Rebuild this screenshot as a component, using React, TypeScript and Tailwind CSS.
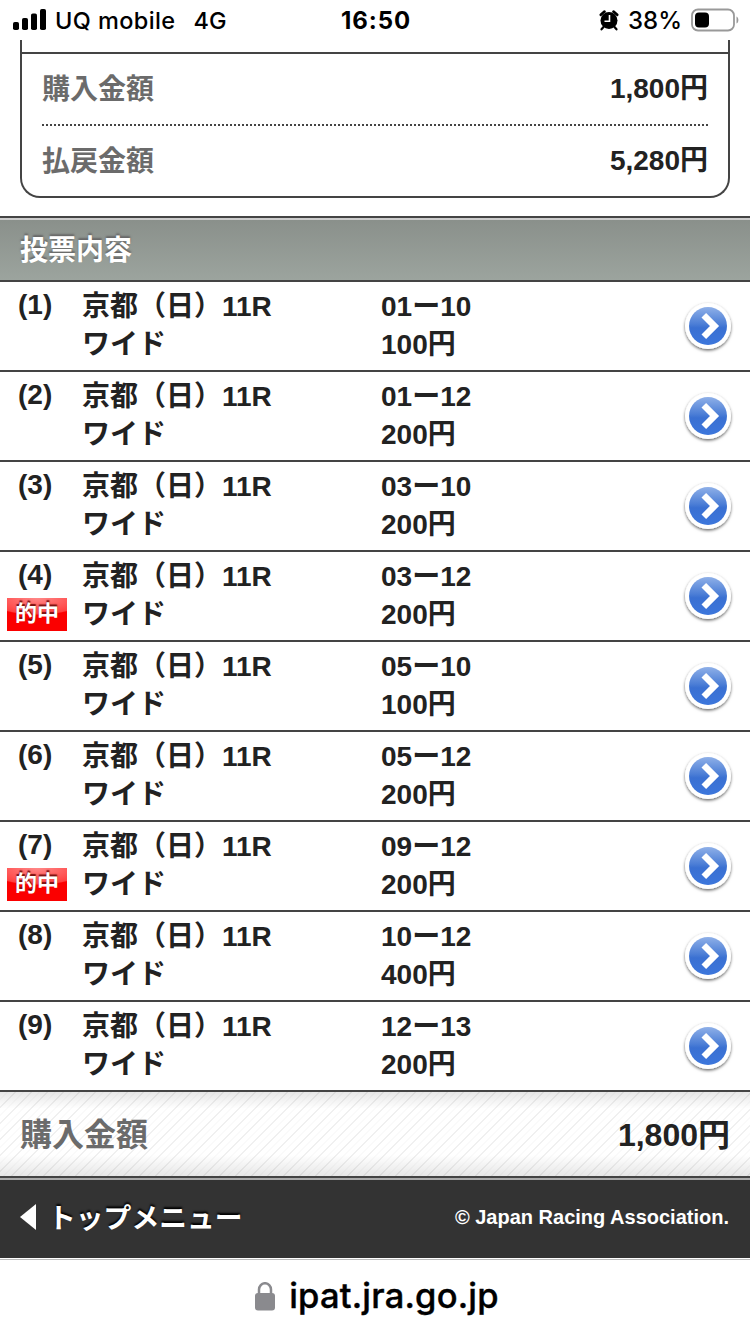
const BETS = [
  { no: 1, pair: "01ー10", amount: "100円", hit: false },
  { no: 2, pair: "01ー12", amount: "200円", hit: false },
  { no: 3, pair: "03ー10", amount: "200円", hit: false },
  { no: 4, pair: "03ー12", amount: "200円", hit: true },
  { no: 5, pair: "05ー10", amount: "100円", hit: false },
  { no: 6, pair: "05ー12", amount: "200円", hit: false },
  { no: 7, pair: "09ー12", amount: "200円", hit: true },
  { no: 8, pair: "10ー12", amount: "400円", hit: false },
  { no: 9, pair: "12ー13", amount: "200円", hit: false },
];

const StatusBar = () => {
  return (
    <div className="flex h-10 items-center justify-between pl-[13px] pr-[11px] pt-px font-['Inter','Liberation_Sans',sans-serif] text-[23.5px] font-medium leading-10 text-black">
      <div className="flex w-[320px] items-center">
        <svg className="mb-px" width="33" height="22" viewBox="0 0 33 22" fill="#000">
          <rect x="0" y="13" width="6" height="8" rx="1.8" />
          <rect x="9" y="9" width="6" height="12" rx="1.8" />
          <rect x="18" y="4.5" width="6" height="16.5" rx="1.8" />
          <rect x="27" y="0" width="6" height="21" rx="1.8" />
        </svg>
        <span className="ml-[9px] tracking-[0.4px]">UQ mobile</span>
        <span className="ml-[18px]">4G</span>
      </div>
      <span className="text-[24px] font-bold tracking-[0.9px]">16:50</span>
      <div className="flex w-[320px] items-center justify-end">
        <svg width="20" height="23" viewBox="0 0 20 23">
          <circle cx="10" cy="11.5" r="8.5" fill="#000" />
          <path d="M1.8 5.8 L5.5 2.6 M14.5 2.6 L18.2 5.8" stroke="#000" strokeWidth="2.6" strokeLinecap="round" />
          <path d="M4.5 18 L2.5 20.3 M15.5 18 L17.5 20.3" stroke="#000" strokeWidth="2.2" strokeLinecap="round" />
          <path d="M10.5 6 V12.2 H5.5" stroke="#fff" strokeWidth="1.6" fill="none" />
        </svg>
        <span className="ml-[9px] text-[24px]">38%</span>
        <svg className="mb-px ml-[9px]" width="48" height="24" viewBox="0 0 48 24">
          <rect x="1" y="1.5" width="42" height="21" rx="6" fill="none" stroke="#999" strokeWidth="1.8" />
          <rect x="4" y="4.5" width="14" height="15" rx="4" fill="#000" />
          <path d="M45.5 8.5 C48 9.5 48 14.5 45.5 15.5 Z" fill="#999" />
        </svg>
      </div>
    </div>
  );
};

const SummaryRow = ({ label, value }: { label: string; value: string }) => {
  return (
    <div className="flex h-[70px] items-center justify-between leading-[38px]">
      <span className="pt-0.5 text-[#6b6b6b]">{label}</span>
      <span>{value}</span>
    </div>
  );
};

const ArrowButton = () => {
  return (
    <svg className="mr-4" width="52" height="54" viewBox="0 0 52 54">
      <defs>
        <linearGradient id="ball" x1="0" y1="0" x2="0" y2="1">
          <stop offset="0" stopColor="#8fb0e8" />
          <stop offset="0.45" stopColor="#4c7ed6" />
          <stop offset="0.55" stopColor="#3a70d2" />
          <stop offset="1" stopColor="#3c76dc" />
        </linearGradient>
        <filter id="shade" x="-20%" y="-20%" width="140%" height="140%">
          <feDropShadow dx="0" dy="1.5" stdDeviation="1.6" floodColor="#000" floodOpacity="0.6" />
        </filter>
      </defs>
      <circle cx="26" cy="26" r="23" fill="#fff" filter="url(#shade)" />
      <circle cx="26" cy="26" r="19" fill="url(#ball)" />
      <path d="M21.8 15.3 L32.5 26 L21.8 36.7" fill="none" stroke="#fff" strokeWidth="6.5" />
    </svg>
  );
};

const BetRow = ({ bet }: { bet: (typeof BETS)[number] }) => {
  return (
    <div className="flex h-[90px] items-start border-b-2 border-[#444] leading-[38px]">
      <div className="w-[82px] pt-1">
        <div className="pl-[18px]">({bet.no})</div>
        {bet.hit && (
          <div className="ml-[7px] mt-1 h-[33px] w-[60px] bg-[radial-gradient(ellipse_50px_17px_at_50%_0,#ff8888_0%,#ff4040_94%,#fb0000_100%)] text-center text-[22px] leading-[32px] text-white [text-shadow:0_-2px_1px_#7a1010]">
            的中
          </div>
        )}
      </div>
      <div className="w-[299px] pt-1.5">
        <div>京都（日）11R</div>
        <div>ワイド</div>
      </div>
      <div className="flex-1 pt-1.5">
        <div>{bet.pair}</div>
        <div>{bet.amount}</div>
      </div>
      <div className="flex h-[88px] items-center pt-0.5">
        <ArrowButton />
      </div>
    </div>
  );
};

const App = () => {
  return (
    <div className="flex h-[1334px] w-[750px] flex-col overflow-hidden bg-white font-['Liberation_Sans','Noto_Sans_CJK_JP',sans-serif] text-[28px] font-bold text-[#222]">
      <StatusBar />
      <div className="mx-5 h-[158px] rounded-b-[20px] border-2 border-t-0 border-[#444]">
        <div className="h-[14px] border-b-2 border-[#444]" />
        <div className="px-5">
          <SummaryRow label="購入金額" value="1,800円" />
          <div className="h-[2px] bg-[repeating-linear-gradient(90deg,#444_0_2px,transparent_2px_4px)]" />
          <SummaryRow label="払戻金額" value="5,280円" />
        </div>
      </div>
      <div className="mt-[18px] h-[66px] border-y-2 border-[#444]">
        <div className="h-[62px] border-t-2 border-[#ccc] bg-linear-to-b from-[#8a908b] to-[#9ca49e] pl-5 leading-[62px] text-white [text-shadow:0_-2px_2px_#666]">
          投票内容
        </div>
      </div>
      {BETS.map((bet) => (
        <BetRow key={bet.no} bet={bet} />
      ))}
      <div className="flex h-[84px] items-center justify-between bg-[linear-gradient(#00000018,transparent_20%,transparent_75%,#00000018),repeating-linear-gradient(135deg,#fff_0_4.6px,#fafafa_4.6px_5.657px,#fff_5.657px_10.3px,#f0f0f0_10.3px_11.314px)] px-5 pt-0.5 text-[32px]">
        <span className="text-[#6b6b6b]">購入金額</span>
        <span>1,800円</span>
      </div>
      <div className="flex h-[82px] items-center justify-between border-t-2 border-[#444] bg-[#333] text-white">
        <div className="flex h-20 w-full items-center justify-between border-t-2 border-[#aaa] pb-1 pl-5 pr-[21px]">
          <div className="flex items-center [text-shadow:0_-2px_2px_#000]">
            <svg width="16" height="26" viewBox="0 0 16 26">
              <path d="M16 0 V26 L0 13 Z" fill="#fff" />
            </svg>
            <span className="ml-3 pt-1 text-[27.8px]">トップメニュー</span>
          </div>
          <span className="text-[20px]">© Japan Racing Association.</span>
        </div>
      </div>
      <div className="mt-px flex flex-1 items-center justify-center border-t border-[#bbb] pb-0.5 pl-1 font-['Inter','Liberation_Sans',sans-serif] text-[34.5px] font-medium text-black">
        <svg width="20" height="29" viewBox="0 0 20 29">
          <rect x="0" y="11" width="20" height="17.5" rx="3" fill="#8a8a8e" />
          <path d="M4 12 V7.5 A6 6.3 0 0 1 16 7.5 V12" fill="none" stroke="#8a8a8e" strokeWidth="2.5" />
        </svg>
        <span className="ml-[14px] tracking-[0.2px] [-webkit-text-stroke:0.4px_#000]">ipat.jra.go.jp</span>
      </div>
    </div>
  );
};

export default App;
